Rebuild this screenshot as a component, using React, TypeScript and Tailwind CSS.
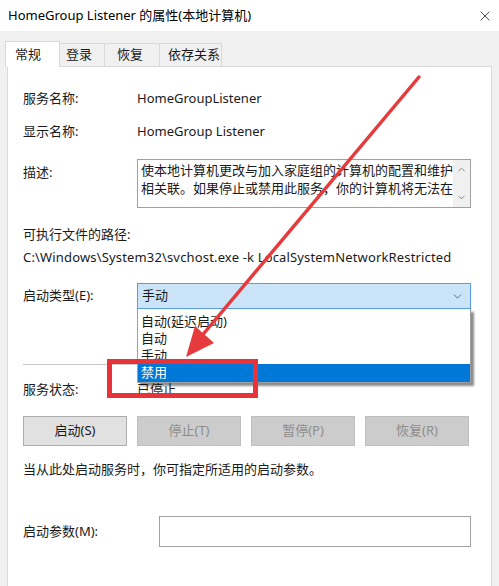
import { ChevronDown, ChevronUp, X } from 'lucide-react';

const font = { fontFamily: '"Noto Sans", "Noto Sans CJK SC", sans-serif' };

const tabs = [
  { label: '登录', cls: 'w-[45px] pl-[6px]' },
  { label: '恢复', cls: 'w-[55px] pl-[12px]' },
  { label: '依存关系', cls: 'w-[62px] pl-[8px]' },
];
const startTypes = ['自动(延迟启动)', '自动', '手动', '禁用'];
const buttons = [
  { label: '启动(S)', enabled: true },
  { label: '停止(T)', enabled: false },
  { label: '暂停(P)', enabled: false },
  { label: '恢复(R)', enabled: false },
];

function Annotation() {
  // red arrow + highlight box drawn over the dialog
  return (
    <svg className="pointer-events-none absolute inset-0 z-30" width={499} height={586}>
      <line x1={419} y1={77} x2={200} y2={338} stroke="#e63b3d" strokeWidth={3.5} strokeLinecap="round" />
      <polygon points="186,357 214,343 195,326" fill="#e63b3d" />
    </svg>
  );
}

export default function App() {
  return (
    <div
      className="relative h-[586px] w-[499px] overflow-hidden bg-[#f0f0f0] text-[13px] text-[#1a1a1a]"
      style={font}
    >
      <div className="flex h-[31px] items-center justify-between bg-white pl-[8px] pr-[6px]">
        <span className="text-[13px] text-black">HomeGroup Listener 的属性(本地计算机)</span>
        <X size={16} strokeWidth={1.3} className="text-[#333]" />
      </div>

      <div className="flex h-[35px] items-end pl-[5px]">
        <div className="relative z-10 -mb-px flex h-[26px] w-[55px] items-center border border-b-0 border-[#d9d9d9] bg-white pl-[9px]">
          常规
        </div>
        {tabs.map((t) => (
          <div
            key={t.label}
            className={`flex h-[23px] items-center border border-b-0 border-l-0 border-[#d9d9d9] ${t.cls}`}
          >
            {t.label}
          </div>
        ))}
      </div>

      <div className="ml-[7px] h-[521px] w-[485px] border border-[#d9d9d9] bg-white pl-[15px] pr-[20px] pt-[22px]">
        <div className="flex h-[20px] items-center">
          <span className="w-[114px]">服务名称:</span>
          <span>HomeGroupListener</span>
        </div>
        <div className="mt-[13px] flex h-[20px] items-center">
          <span className="w-[114px]">显示名称:</span>
          <span>HomeGroup Listener</span>
        </div>

        <div className="mt-[17px] flex">
          <span className="w-[114px] pt-[4px]">描述:</span>
          <div className="flex h-[49px] w-[334px] border border-[#a0a0a0]">
            <div className="flex-1 pl-[3px] pt-[1px] leading-[18px]">
              使本地计算机更改与加入家庭组的计算机的配置和维护
              <br />
              相关联。如果停止或禁用此服务，你的计算机将无法在
            </div>
            <div className="flex w-[17px] flex-col items-center justify-between bg-[#f0f0f0] py-[4px] text-[#606060]">
              <ChevronUp size={11} strokeWidth={1.6} />
              <ChevronDown size={11} strokeWidth={1.6} />
            </div>
          </div>
        </div>

        <div className="mt-[17px] flex h-[20px] items-center">可执行文件的路径:</div>
        <div className="mt-[3px] flex h-[20px] items-center whitespace-nowrap tracking-[0.16px]">
          C:\Windows\System32\svchost.exe -k LocalSystemNetworkRestricted
        </div>

        <div className="mt-[15px] flex items-center">
          <span className="w-[114px]">启动类型(E):</span>
          <div className="relative w-[334px]">
            <div className="flex h-[26px] items-center justify-between border border-[#569de5] bg-[#cce4f7] pl-[4px] pr-[6px]">
              <span>手动</span>
              <ChevronDown size={13} strokeWidth={1.4} className="text-[#444]" />
            </div>
            <div className="absolute left-0 top-full z-20 w-[334px] border border-t-0 border-[#a0a0a0] bg-white pt-[4px] shadow-[3px_3px_2px_rgba(0,0,0,0.45)]">
              {startTypes.map((s) =>
                s === '禁用' ? (
                  <div key={s} className="flex h-[18px] items-center bg-[#0078d7] pl-[3px] text-white">
                    {s}
                  </div>
                ) : (
                  <div key={s} className="flex h-[17px] items-center pl-[3px]">
                    {s}
                  </div>
                )
              )}
            </div>
          </div>
        </div>

        <div className="mt-[55px] h-px w-[447px] bg-[#c8c8c8]" />

        <div className="mt-[15px] flex h-[20px] items-center">
          <span className="w-[114px]">服务状态:</span>
          <span>已停止</span>
        </div>

        <div className="mt-[16px] flex gap-[10px]">
          {buttons.map((b) => (
            <div
              key={b.label}
              className={
                b.enabled
                  ? 'flex h-[30px] w-[104px] items-center justify-center border border-[#adadad] bg-[#e1e1e1]'
                  : 'flex h-[30px] w-[104px] items-center justify-center border border-[#bfbfbf] bg-[#cccccc] text-[#8c8c8c]'
              }
            >
              {b.label}
            </div>
          ))}
        </div>

        <div className="mt-[14px] flex h-[20px] items-center">当从此处启动服务时，你可指定所适用的启动参数。</div>

        <div className="mt-[36px] flex items-center">
          <span className="w-[136px]">启动参数(M):</span>
          <div className="h-[31px] w-[312px] border border-[#a0a0a0] bg-white" />
        </div>
      </div>

      <div className="absolute left-[107px] top-[359px] z-30 h-[39px] w-[151px] border-[5px] border-[#e8333a]" />
      <Annotation />
    </div>
  );
}
